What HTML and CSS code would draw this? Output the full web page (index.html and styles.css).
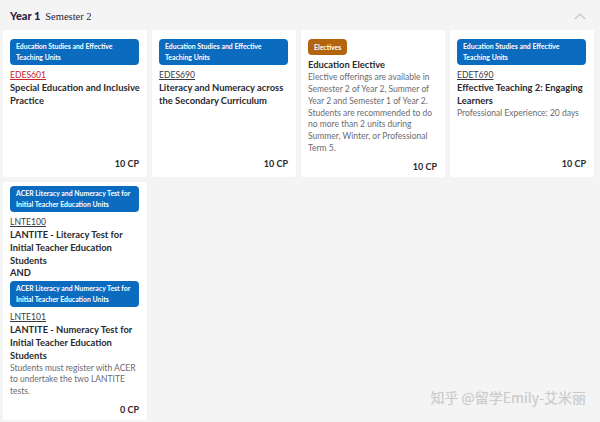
FILE: index.html
```html
<!DOCTYPE html>
<html lang="en">
  <head>
    <meta charset="UTF-8" />
    <meta name="viewport" content="width=device-width, initial-scale=1.0" />
    <title>Course Map - Year 1 Semester 2</title>
    <link rel="stylesheet" href="styles.css">
  </head>
  <body>
    <section class="semester">
      <header class="semester__header">
        <h2><strong>Year 1</strong> <span>Semester 2</span></h2>
        <svg class="semester__toggle" width="12" height="8" viewBox="0 0 12 8">
          <path d="M1 7 L6 2 L11 7" fill="none" stroke="#c4c4c8" stroke-width="1.2" />
        </svg>
      </header>

      <div class="units">
        <article class="unit">
          <span class="badge badge--blue">Education Studies and Effective Teaching Units</span>
          <a class="unit__code unit__code--active">EDES601</a>
          <h3 class="unit__title">Special Education and Inclusive Practice</h3>
          <span class="unit__cp">10 CP</span>
        </article>

        <article class="unit">
          <span class="badge badge--blue">Education Studies and Effective Teaching Units</span>
          <a class="unit__code">EDES690</a>
          <h3 class="unit__title">Literacy and Numeracy across the Secondary Curriculum</h3>
          <span class="unit__cp">10 CP</span>
        </article>

        <article class="unit">
          <span class="badge badge--orange">Electives</span>
          <h3 class="unit__title unit__title--plain">Education Elective</h3>
          <p class="unit__desc">Elective offerings are available in Semester 2 of Year 2, Summer of Year 2 and Semester 1 of Year 2. Students are recommended to do no more than 2 units during Summer, Winter, or Professional Term 5.</p>
          <span class="unit__cp">10 CP</span>
        </article>

        <article class="unit">
          <span class="badge badge--blue">Education Studies and Effective Teaching Units</span>
          <a class="unit__code">EDET690</a>
          <h3 class="unit__title">Effective Teaching 2: Engaging Learners</h3>
          <p class="unit__desc">Professional Experience: 20 days</p>
          <span class="unit__cp">10 CP</span>
        </article>

        <article class="unit unit--tall">
          <span class="badge badge--blue">ACER Literacy and Numeracy Test for Initial Teacher Education Units</span>
          <a class="unit__code">LNTE100</a>
          <h3 class="unit__title">LANTITE - Literacy Test for Initial Teacher Education Students</h3>
          <span class="unit__and">AND</span>
          <span class="badge badge--blue">ACER Literacy and Numeracy Test for Initial Teacher Education Units</span>
          <a class="unit__code">LNTE101</a>
          <h3 class="unit__title">LANTITE - Numeracy Test for Initial Teacher Education Students</h3>
          <p class="unit__desc">Students must register with ACER to undertake the two LANTITE tests.</p>
          <span class="unit__cp">0 CP</span>
        </article>
      </div>
    </section>

    <div class="watermark">知乎 @留学Emily-艾米丽</div>
  </body>
</html>
```

FILE: styles.css
```css
* {
  margin: 0;
  padding: 0;
  box-sizing: border-box;
}

:root {
  --pageBg: #f4f4f5;
  --cardBg: #ffffff;
  --textDark: #2a2a2e;
  --textMuted: #6b6b70;
  --blue: #0b6bbf;
  --orange: #b4640f;
  --red: #c8252c;
}

body {
  background-color: var(--pageBg);
  font-family: "Lato", "Noto Sans", sans-serif;
  color: var(--textDark);
  width: 600px;
  height: 422px;
  overflow: hidden;
  position: relative;
}

.semester__header {
  display: flex;
  justify-content: space-between;
  align-items: center;
  height: 30px;
  padding: 0 14px 0 10px;
}

.semester__header h2 {
  font-size: 11px;
  font-weight: normal;
  color: #2b2140;
}

.semester__header strong {
  font-weight: 900;
  margin-right: 2px;
}

.semester__header span {
  font-family: "Liberation Serif", "DejaVu Serif", serif;
  font-size: 10.5px;
}

.semester__toggle {
  margin-top: 2px;
}

.units {
  display: grid;
  grid-template-columns: repeat(4, 144px);
  grid-template-rows: 147px 238px;
  gap: 5px;
  padding: 0 3px;
}

.unit {
  background: var(--cardBg);
  border-radius: 2px;
  padding: 9px 7px 7px 7px;
  display: flex;
  flex-direction: column;
  align-items: flex-start;
}

.unit--tall {
  padding-top: 4px;
  padding-bottom: 6px;
}

.badge {
  display: block;
  width: calc(100% - 1px);
  color: #fff;
  font-size: 6.9px;
  font-weight: 700;
  line-height: 11px;
  padding: 2px 6px;
  border-radius: 4px;
}

.badge--blue {
  background: var(--blue);
}

.badge--orange {
  display: inline-block;
  width: auto;
  background: var(--orange);
  padding: 2px 6px;
  line-height: 12px;
}

.unit__code {
  margin-top: 5px;
  font-size: 8.6px;
  line-height: 11px;
  color: #3a3a3e;
  text-decoration: underline;
}

.unit__code--active {
  color: var(--red);
}

.unit__title {
  margin-top: 1px;
  font-size: 9.4px;
  font-weight: 700;
  line-height: 12.8px;
  color: var(--textDark);
}

.unit__title--plain {
  margin-top: 4px;
}

.unit__desc {
  font-size: 8.5px;
  line-height: 11.9px;
  color: var(--textMuted);
}

.unit__and {
  font-size: 9.4px;
  font-weight: 700;
  line-height: 12.8px;
  margin-bottom: 1px;
}

.unit__cp {
  margin-top: auto;
  align-self: flex-end;
  margin-right: 1px;
  font-size: 9px;
  font-weight: 700;
  padding-top: 6px;
  line-height: 12px;
}

.watermark {
  position: absolute;
  right: 14px;
  bottom: 15px;
  font-family: "Noto Sans CJK SC", "Noto Sans", sans-serif;
  font-size: 14px;
  color: #cbcbcd;
  text-shadow: 0 0 1px #e0e0e2;
}
```
